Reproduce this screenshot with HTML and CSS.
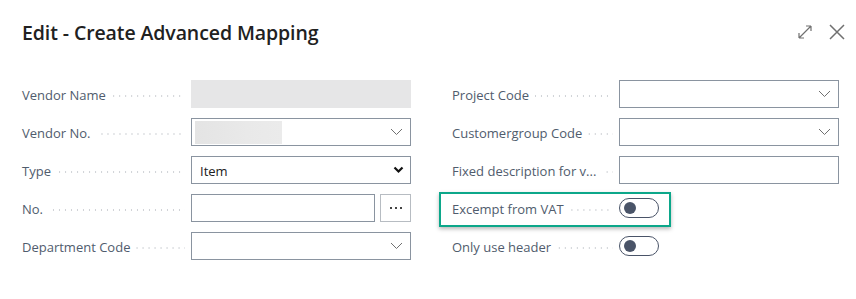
FILE: index.html
```html
<!DOCTYPE html>
<html>
<head>
<meta charset="utf-8">
<link rel="stylesheet" href="styles.css">
</head>
<body>
<div class="dialog">
  <div class="header">
    <h1 class="title">Edit - Create Advanced Mapping</h1>
    <div class="actions">
      <svg class="icon" width="18" height="18" viewBox="0 0 18 18"><path d="M3 15 L15 3 M3 15 L3 10 M3 15 L8 15 M15 3 L10 3 M15 3 L15 8" fill="none" stroke="#707070" stroke-width="1.2"/></svg>
      <svg class="icon" width="18" height="18" viewBox="0 0 18 18"><path d="M2 2 L16 16 M16 2 L2 16" fill="none" stroke="#707070" stroke-width="1.5"/></svg>
    </div>
  </div>
  <div class="form">
    <div class="col col-left">
      <div class="row"><span class="label">Vendor Name</span><span class="lead"></span><div class="field readonly"></div></div>
      <div class="row"><span class="label">Vendor No.</span><span class="lead"></span><div class="field"><span class="blur"></span><svg class="chev" width="13" height="8" viewBox="0 0 13 8"><path d="M1 1 L6.5 6.5 L12 1" fill="none" stroke="#707070" stroke-width="1"/></svg></div></div>
      <div class="row"><span class="label">Type</span><span class="lead"></span><div class="field select"><span class="val">Item</span><svg class="chev" width="11" height="8" viewBox="0 0 11 8"><path d="M1.5 1.5 L5.5 5.5 L9.5 1.5" fill="none" stroke="#111" stroke-width="2.2"/></svg></div></div>
      <div class="row"><span class="label">No.</span><span class="lead"></span><div class="field-group"><div class="field"></div><div class="more"><span class="dot"></span><span class="dot"></span><span class="dot"></span></div></div></div>
      <div class="row"><span class="label">Department Code</span><span class="lead"></span><div class="field"><svg class="chev" width="13" height="8" viewBox="0 0 13 8"><path d="M1 1 L6.5 6.5 L12 1" fill="none" stroke="#707070" stroke-width="1"/></svg></div></div>
    </div>
    <div class="col col-right">
      <div class="row"><span class="label">Project Code</span><span class="lead"></span><div class="field"><svg class="chev" width="13" height="8" viewBox="0 0 13 8"><path d="M1 1 L6.5 6.5 L12 1" fill="none" stroke="#707070" stroke-width="1"/></svg></div></div>
      <div class="row"><span class="label">Customergroup Code</span><span class="lead"></span><div class="field"><svg class="chev" width="13" height="8" viewBox="0 0 13 8"><path d="M1 1 L6.5 6.5 L12 1" fill="none" stroke="#707070" stroke-width="1"/></svg></div></div>
      <div class="row"><span class="label">Fixed description for v...</span><span class="lead"></span><div class="field"></div></div>
      <div class="row highlight"><span class="label">Excempt from VAT</span><span class="lead"></span><div class="toggle-cell"><span class="toggle"><span class="knob"></span></span></div></div>
      <div class="row"><span class="label">Only use header</span><span class="lead"></span><div class="toggle-cell"><span class="toggle"><span class="knob"></span></span></div></div>
    </div>
  </div>
</div>
</body>
</html>
```

FILE: styles.css
```css
* { box-sizing: border-box; }
html, body { margin: 0; padding: 0; background: #fff; }
body { font-family: "Open Sans", "Noto Sans", sans-serif; }

.dialog {
  width: 856px;
  height: 299px;
  padding: 19px 10px 0 22px;
}

.header {
  display: flex;
  justify-content: space-between;
  align-items: center;
  height: 28px;
}

.title {
  margin: 0;
  font-size: 19.5px;
  font-weight: 600;
  color: #212121;
  letter-spacing: -0.1px;
  line-height: 28px;
}

.actions {
  display: flex;
  gap: 14px;
  align-items: center;
  margin-top: -2px;
}

.icon { display: block; }

.form {
  display: flex;
  gap: 41px;
  margin-top: 33px;
}

.col {
  display: flex;
  flex-direction: column;
  gap: 10px;
  width: 389px;
}
.col-right { width: 387px; }

.row {
  display: flex;
  align-items: center;
  height: 28px;
  position: relative;
}

.label {
  font-size: 13px;
  color: #505c6d;
  white-space: nowrap;
  padding-right: 6px;
  padding-top: 2px;
}

.lead {
  flex: 1;
  height: 2px;
  margin-right: 6px;
  margin-top: 3px;
  background-image: linear-gradient(to right, #cfd2d6 1.5px, transparent 1.5px);
  background-size: 6px 2px;
  background-repeat: repeat-x;
  background-position: right center;
}

.field {
  width: 220px;
  height: 28px;
  border: 1px solid #8a94a0;
  background: #fff;
  display: flex;
  align-items: center;
  justify-content: space-between;
  padding: 0 7px 0 3px;
}

.field.readonly {
  border: none;
  background: #e6e6e7;
}

.blur {
  width: 87px;
  height: 23px;
  background: linear-gradient(to right, #e4e4e4, #e9e9e9 60%, #ebebeb);
}

.chev { margin-left: auto; display: block; }

.select { padding: 0 6px 0 8px; }
.val { font-size: 13px; color: #212121; padding-top: 1px; }

.field-group {
  display: flex;
  gap: 5px;
  width: 220px;
}
.field-group .field { width: 184px; }

.more {
  width: 31px;
  height: 28px;
  border: 1px solid #b7bcc2;
  display: flex;
  align-items: center;
  justify-content: center;
  gap: 3px;
}
.dot {
  width: 2px;
  height: 2px;
  background: #444;
}

.toggle-cell {
  width: 220px;
  display: flex;
  align-items: center;
}

.toggle {
  width: 40px;
  height: 20px;
  border: 1px solid #4a5468;
  border-radius: 10px;
  display: flex;
  align-items: center;
  padding-left: 4px;
}

.knob {
  width: 12px;
  height: 12px;
  border-radius: 50%;
  background: #4a5468;
}

.highlight::after {
  content: "";
  position: absolute;
  left: -13px;
  top: -2px;
  right: 168px;
  bottom: -5px;
  border: 2.5px solid #0ca78a;
  box-shadow: 0 2px 4px rgba(0,0,0,0.28);
  pointer-events: none;
}
```
